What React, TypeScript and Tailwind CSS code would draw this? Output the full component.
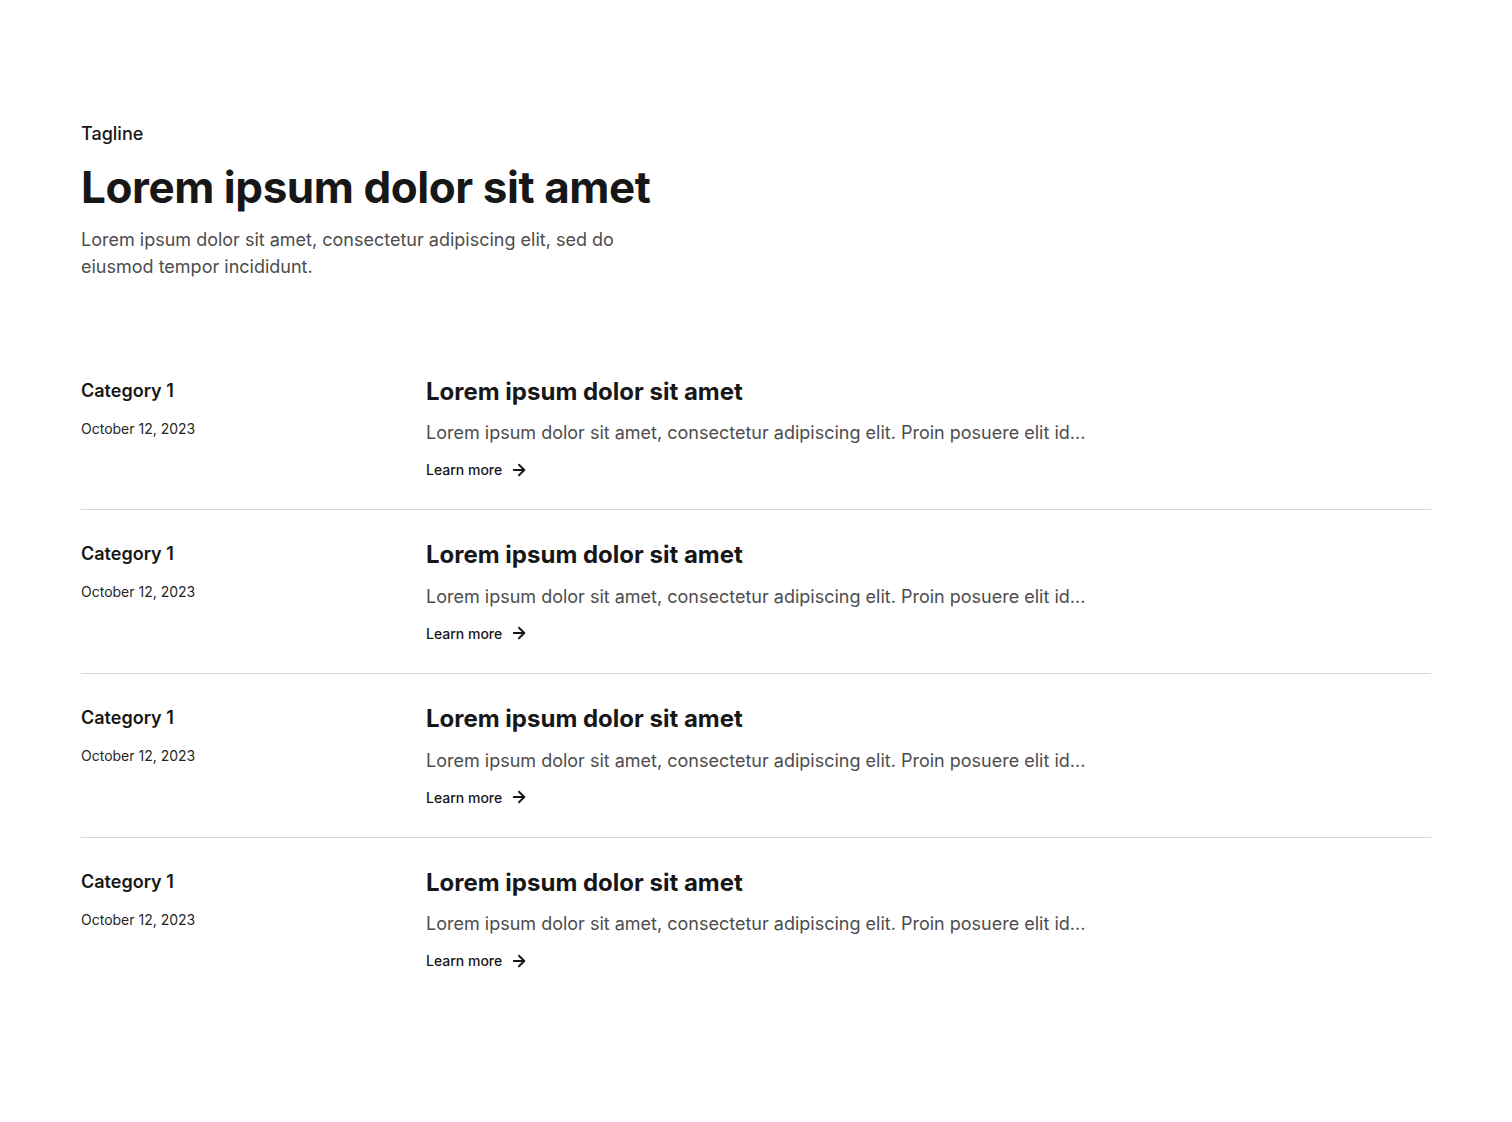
import { ArrowRight } from 'lucide-react';

const posts = [1, 2, 3, 4].map((i) => ({
  id: i,
  category: 'Category 1',
  date: 'October 12, 2023',
  title: 'Lorem ipsum dolor sit amet',
  excerpt: 'Lorem ipsum dolor sit amet, consectetur adipiscing elit. Proin posuere elit id...',
}));

export default function App() {
  return (
    <div className="min-h-screen bg-white font-['Inter',sans-serif] text-[#171717]">
      <div className="px-[81px] pt-[120px] pb-20">
        {/* Header */}
        <div className="mb-[67px]">
          <p className="text-lg font-medium leading-[27px] mb-[14px]">Tagline</p>
          <h1 className="text-[44px] font-bold leading-[1.2] tracking-[-0.01em] mb-3">
            Lorem ipsum dolor sit amet
          </h1>
          <p className="max-w-[560px] text-lg leading-[27px] text-[#4d4d4d]">
            Lorem ipsum dolor sit amet, consectetur adipiscing elit, sed do eiusmod tempor incididunt.
          </p>
        </div>

        {/* Posts */}
        <div>
          {posts.map((post, idx) => (
            <div
              key={post.id}
              className={`flex pt-7 pb-7 ${idx < posts.length - 1 ? 'border-b border-[#d9d9d9]' : ''}`}
            >
              <div className="w-[345px] shrink-0 pt-[2px]">
                <p className="text-lg font-semibold leading-[27px] mb-[14px]">{post.category}</p>
                <p className="text-sm leading-[21px] text-[#262626]">{post.date}</p>
              </div>
              <div className="flex-1">
                <h2 className="text-2xl font-bold leading-[1.4] mb-[11px]">{post.title}</h2>
                <p className="text-lg leading-[27px] text-[#4d4d4d] mb-[11px]">{post.excerpt}</p>
                <a href="#" className="inline-flex items-center gap-2 text-sm font-medium leading-[21px]">
                  Learn more
                  <ArrowRight className="w-[18px] h-[18px]" strokeWidth={2.5} />
                </a>
              </div>
            </div>
          ))}
        </div>
      </div>
    </div>
  );
}
